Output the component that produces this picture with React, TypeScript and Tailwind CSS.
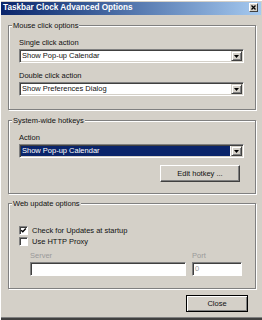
import React from "react";

function Group({ title, h, children }: { title: string; h: string; children: React.ReactNode }) {
  return (
    <div className={"relative border border-[#808080] shadow-[inset_1px_1px_0_#fff,1px_1px_0_#fff] " + h}>
      <span className="absolute left-[3px] top-[-5px] px-[1px] bg-[#d4d0c8] leading-[9px]">{title}</span>
      {children}
    </div>
  );
}

function DropButton() {
  return (
    <div className="w-[11px] shrink-0 bg-[#d4d0c8] border border-t-[#d4d0c8] border-l-[#d4d0c8] border-b-[#404040] border-r-[#404040] shadow-[inset_1px_1px_0_#fff,inset_-1px_-1px_0_#808080] flex items-center justify-center">
      <svg width="5" height="3" viewBox="0 0 5 3">
        <path d="M0 0H5L2.5 3Z" fill="#000" />
      </svg>
    </div>
  );
}

function Select({ value, selected, className }: { value: string; selected?: boolean; className: string }) {
  return (
    <div
      className={
        "h-[14px] flex bg-white border border-t-[#808080] border-l-[#808080] border-b-white border-r-white shadow-[inset_1px_1px_0_#404040,inset_-1px_-1px_0_#d4d0c8] p-[1px] " +
        className
      }
    >
      <div className="flex-1 flex items-center pr-[1px]">
        {selected ? (
          <div className="h-full flex-1 bg-[#0a246a] text-white pl-[1px] leading-[10px]">{value}</div>
        ) : (
          <div className="pl-[1px] leading-[10px]">{value}</div>
        )}
      </div>
      <DropButton />
    </div>
  );
}

function Checkbox({ checked }: { checked?: boolean }) {
  return (
    <div className="w-[9px] h-[9px] shrink-0 bg-white border border-t-[#808080] border-l-[#808080] border-b-white border-r-white shadow-[inset_1px_1px_0_#404040] flex items-center justify-center">
      {checked && (
        <svg width="7" height="7" viewBox="0 0 7 7">
          <path d="M1.2 3.2L2.8 4.8L5.8 1.6" stroke="#000" strokeWidth="1.4" fill="none" />
        </svg>
      )}
    </div>
  );
}

export default function App() {
  return (
    <div className="w-[262px] h-[320px] bg-[#d4d0c8] flex flex-col font-['Liberation_Sans',Arial,sans-serif] text-[7.5px] leading-[9px] text-[#111] shadow-[inset_1px_1px_0_#fff,inset_0_-1px_0_#404040,inset_0_-2px_0_#404040,inset_0_-3px_0_#808080] overflow-hidden">
      <div className="mx-[1px] mt-[2px] h-[13px] flex items-start bg-linear-to-r from-[#0a246a] to-[#a6caf0] pl-[2px] pr-[3px]">
        <span className="flex-1 text-white font-bold text-[8.2px] leading-[11px]">Taskbar Clock Advanced Options</span>
        <div className="mt-[1px] w-[9px] h-[9px] bg-[#d4d0c8] border border-t-white border-l-white border-b-[#404040] border-r-[#404040] flex items-center justify-center">
          <svg width="5" height="5" viewBox="0 0 5 5">
            <path d="M0.5 0.5L4.5 4.5M4.5 0.5L0.5 4.5" stroke="#000" strokeWidth="1.3" />
          </svg>
        </div>
      </div>

      <div className="ml-[8px] mr-[6px] mt-[10px] flex flex-col">
        <Group title="Mouse click options" h="h-[85px]">
          <div className="pl-[10px] pr-[11px] pt-[12px] flex flex-col">
            <div className="h-[9px]">Single click action</div>
            <Select className="mt-[2px]" value="Show Pop-up Calendar" />
            <div className="mt-[8px] h-[9px]">Double click action</div>
            <Select className="mt-[2px]" value="Show Preferences Dialog" />
          </div>
        </Group>

        <div className="mt-[10px]">
          <Group title="System-wide hotkeys" h="h-[74px]">
            <div className="pl-[10px] pr-[11px] pt-[12px] flex flex-col">
              <div className="h-[9px]">Action</div>
              <Select className="mt-[2px]" value="Show Pop-up Calendar" selected />
              <div className="mt-[7px] flex justify-end pr-[4px]">
                <div className="w-[80px] h-[17px] bg-[#d4d0c8] border border-t-white border-l-white border-b-[#404040] border-r-[#404040] shadow-[inset_-1px_-1px_0_#808080] flex items-center justify-center">
                  Edit hotkey ...
                </div>
              </div>
            </div>
          </Group>
        </div>

        <div className="mt-[9px]">
          <Group title="Web update options" h="h-[86px]">
            <div className="pl-[10px] pr-[11px] pt-[22px] flex flex-col">
              <div className="h-[9px] flex items-center gap-[4px]">
                <Checkbox checked />
                <span>Check for Updates at startup</span>
              </div>
              <div className="mt-[2px] h-[9px] flex items-center gap-[4px]">
                <Checkbox />
                <span>Use HTTP Proxy</span>
              </div>
              <div className="mt-[5px] pl-[11px] flex gap-[6px]">
                <div className="w-[156px] flex flex-col">
                  <div className="h-[9px] text-[#9a9a9a]">Server</div>
                  <div className="mt-[2px] h-[14px] bg-white border border-t-[#808080] border-l-[#808080] border-b-white border-r-white shadow-[inset_1px_1px_0_#404040]" />
                </div>
                <div className="w-[50px] flex flex-col">
                  <div className="h-[9px] text-[#9a9a9a]">Port</div>
                  <div className="mt-[2px] h-[14px] bg-white border border-t-[#808080] border-l-[#808080] border-b-white border-r-white shadow-[inset_1px_1px_0_#404040] pl-[2px] leading-[12px] text-[#9a9a9a]">
                    0
                  </div>
                </div>
              </div>
            </div>
          </Group>
        </div>

        <div className="mt-[6px] flex justify-end pr-[8px]">
          <div className="w-[62px] h-[17px] bg-[#d4d0c8] border border-black shadow-[inset_1px_1px_0_#fff,inset_-1px_-1px_0_#808080] flex items-center justify-center">
            Close
          </div>
        </div>
      </div>
    </div>
  );
}
